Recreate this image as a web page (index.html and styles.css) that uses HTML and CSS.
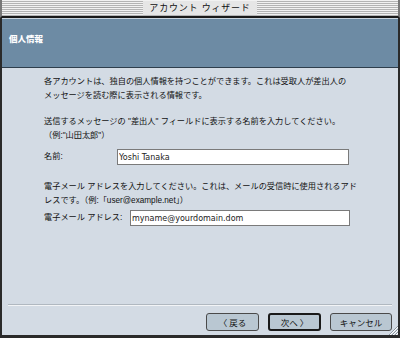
FILE: index.html
```html
<!DOCTYPE html>
<html>
<head>
  <title>アカウント ウィザード</title>
  <link rel="stylesheet" href="styles.css">
</head>
<body>
  <div class="window">
    <div class="titlebar">
      <span class="title">アカウント ウィザード</span>
    </div>
    <div class="header">
      <h1>個人情報</h1>
    </div>
    <div class="content">
      <p>各アカウントは、独自の個人情報を持つことができます。これは受取人が差出人の<br>メッセージを読む際に表示される情報です。</p>
      <p>送信するメッセージの "差出人" フィールドに表示する名前を入力してください。<br>（例:"山田太郎"）</p>
      <div class="field name-field">
        <label class="name-label" for="name">名前:</label>
        <input id="name" class="name-input" type="text" value="Yoshi Tanaka">
      </div>
      <p>電子メール アドレスを入力してください。これは、メールの受信時に使用されるアド<br>レスです。（例:「user@example.net」）</p>
      <div class="field mail-field">
        <label class="mail-label" for="mail">電子メール アドレス:</label>
        <input id="mail" class="mail-input" type="text" value="myname@yourdomain.dom">
      </div>
    </div>
    <div class="footer">
      <div class="separator"></div>
      <div class="buttons">
        <button class="btn">〈 戻る</button>
        <button class="btn default">次へ 〉</button>
        <button class="btn">キャンセル</button>
      </div>
      <svg class="grip" width="10" height="10" viewBox="0 0 10 10">
        <path d="M10 1 L1 10 M10 4 L4 10 M10 7 L7 10" stroke="#8a949e" stroke-width="1"/>
        <path d="M10 2 L2 10 M10 5 L5 10 M10 8 L8 10" stroke="#fff" stroke-width="1"/>
      </svg>
    </div>
  </div>
</body>
</html>
```

FILE: styles.css
```css
body {
  margin: 0;
  background: #fff;
  font-family: "Liberation Sans", "Noto Sans CJK JP", sans-serif;
}
.window {
  width: 400px;
  height: 338px;
  box-sizing: border-box;
  border: 2px solid #2a2a2a;
  border-top: none;
  border-bottom: 3px solid #2a2a2a;
  background: #d3dbe4;
  display: flex;
  flex-direction: column;
  position: relative;
}
.titlebar {
  height: 16px;
  border-bottom: 2px solid #1a1a1a;
  margin: 0 -2px;
  background: repeating-linear-gradient(#f2f2f2 0 1px, #b4b4b4 1px 2px);
  display: flex;
  justify-content: center;
  align-items: center;
  border-left: 2px solid #777;
  border-right: 2px solid #777;
  box-sizing: content-box;
}
.title {
  background: #e6e6e6;
  padding: 0 6px;
  height: 14px;
  line-height: 14px;
  font-size: 9px;
  letter-spacing: 0.8px;
  color: #111;
}
.header {
  height: 48px;
  background: #6d8ba4;
  border-top: 1px solid #c8d4de;
  border-bottom: 1px solid #2e3e4c;
}
.header h1 {
  margin: 0;
  padding: 13px 0 0 7px;
  font-size: 8.5px;
  font-weight: 900;
  color: #fff;
}
.content {
  flex: 1;
  padding: 7px 0 0 42px;
  font-size: 8.2px;
  line-height: 14px;
  color: #111;
}
.content p {
  margin: 0 0 12px;
}
.field {
  display: flex;
  align-items: center;
}
.name-field {
  margin: -6px 0 15px;
}
.mail-field {
  margin: -10px 0 0;
}
.field input {
  height: 16px;
  box-sizing: border-box;
  border: 1px solid #7a7a7a;
  background: #fff;
  padding: 0 1px;
  font-family: "DejaVu Sans", sans-serif;
  font-size: 8px;
  color: #222;
}
.name-label {
  width: 73px;
}
.name-input {
  width: 232px;
}
.mail-label {
  width: 86px;
}
.mail-input {
  width: 220px;
}
.footer {
  padding: 0 6px;
  height: 31px;
}
.separator {
  border-top: 1px solid #b0b8c0;
  border-bottom: 1px solid #f2f4f6;
}
.buttons {
  display: flex;
  justify-content: flex-end;
  gap: 9px;
  margin-top: 7px;
}
.btn {
  height: 18px;
  padding: 0;
  width: 53px;
  border: 1px solid #4a4a4a;
  border-radius: 3px;
  background: #b9c7d2;
  font-family: "Noto Sans CJK JP", sans-serif;
  font-size: 8.5px;
  color: #111;
}
.btn.default {
  border: 2px solid #1a1a1a;
}
.btn:last-child {
  width: 62px;
}
.grip {
  position: absolute;
  right: 0;
  bottom: 0;
}
```
